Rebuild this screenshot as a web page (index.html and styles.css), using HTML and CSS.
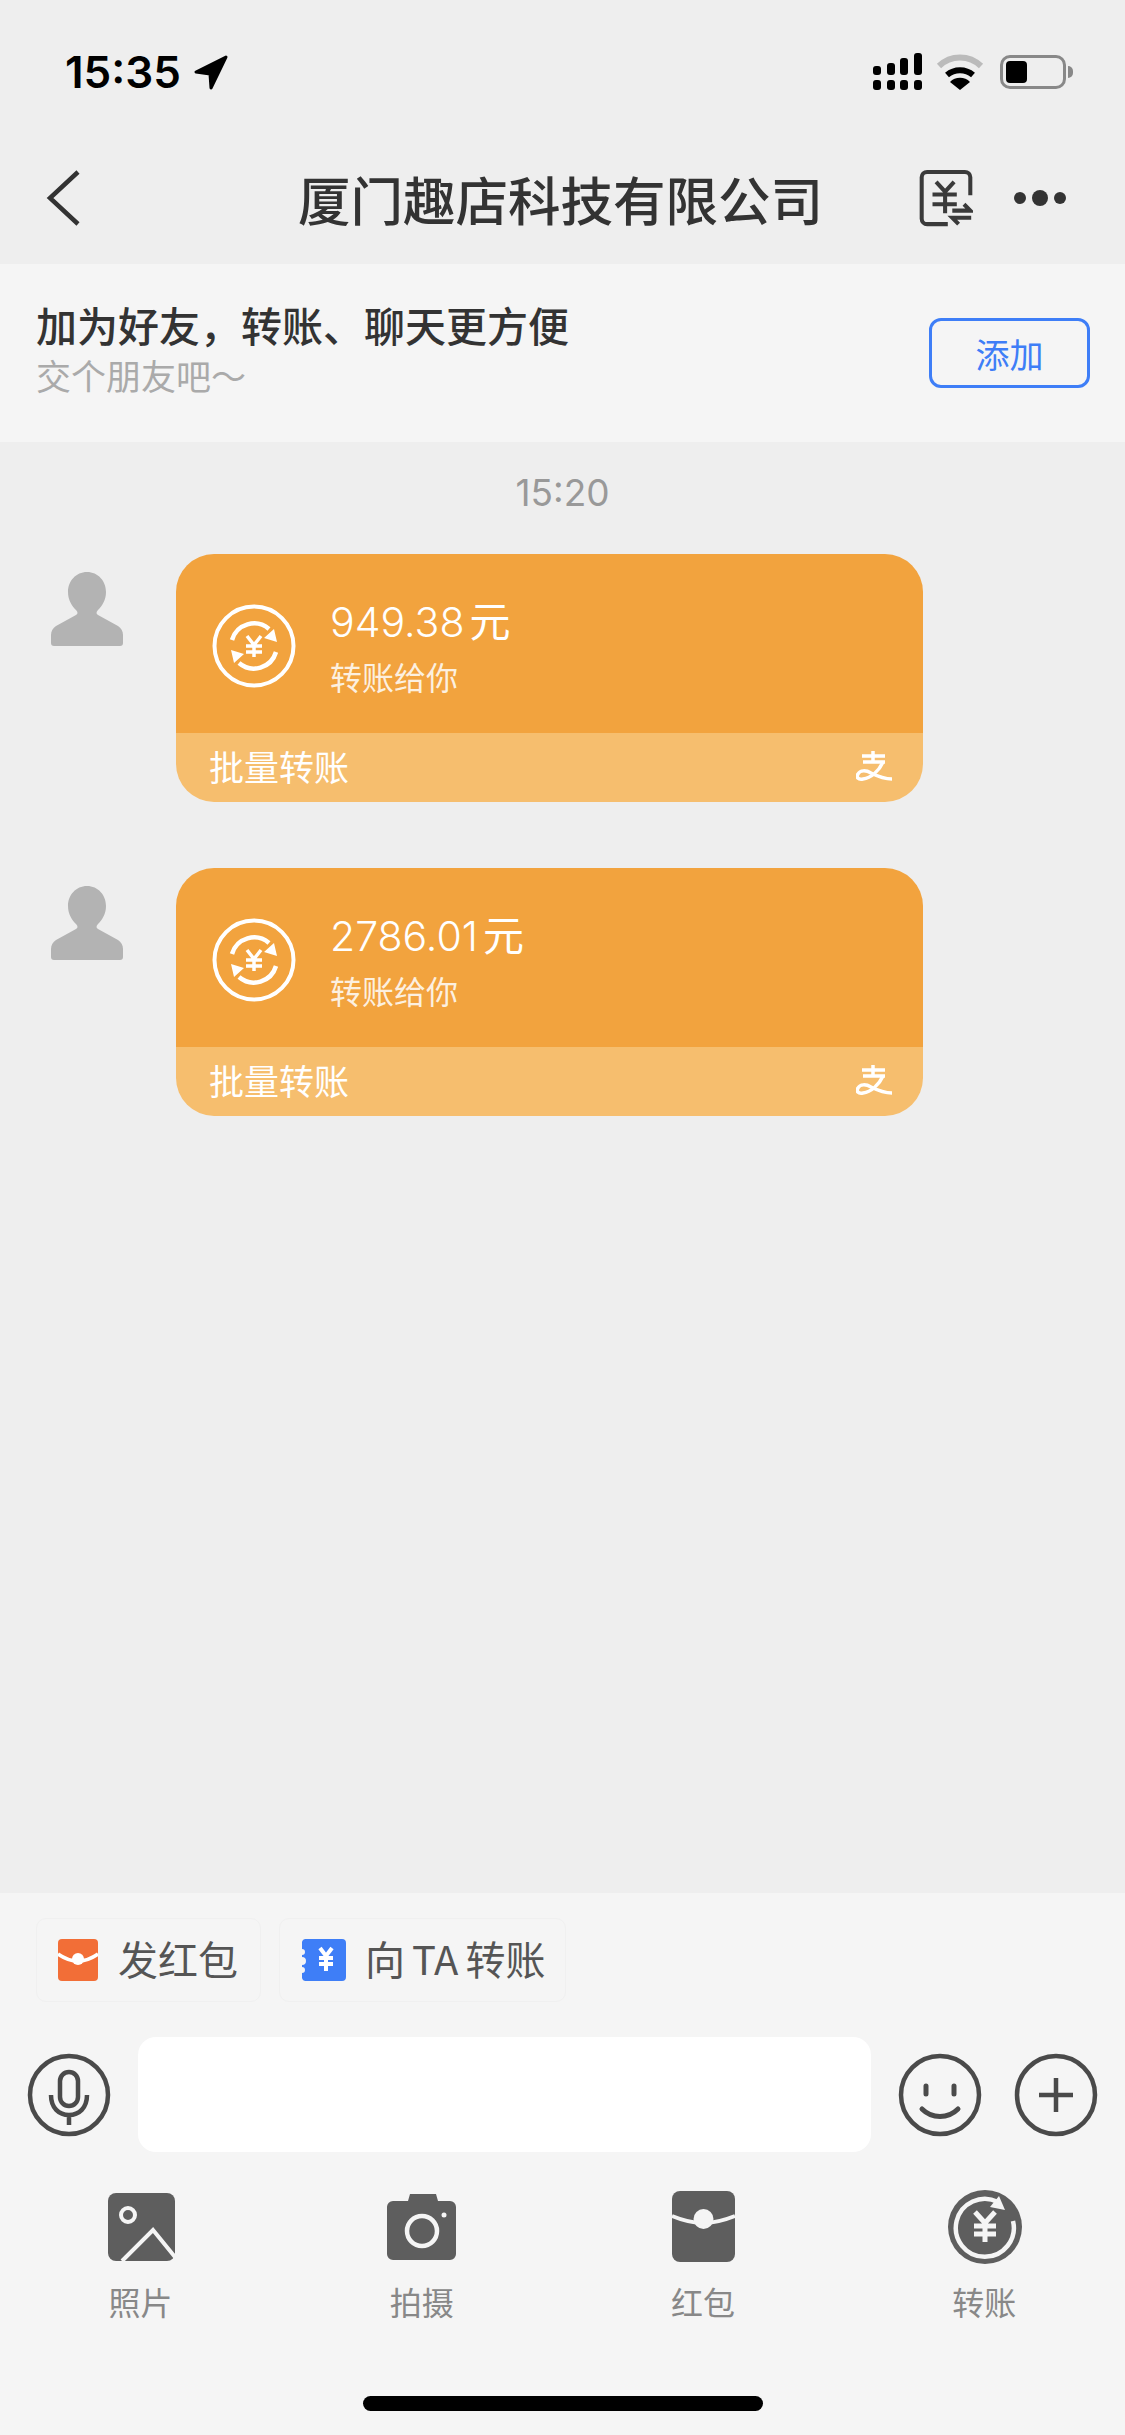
FILE: index.html
```html
<!DOCTYPE html>
<html lang="zh-CN">
<head>
  <meta charset="UTF-8">
  <title>厦门趣店科技有限公司</title>
  <link rel="stylesheet" href="styles.css">
</head>
<body>
<div class="page">
  <header class="top">
    <div class="status">
      <div class="clock">
        <span>15:35</span>
        <svg width="36" height="36" viewBox="0 0 36 36"><path d="M33 3 3 18l14 2 1 14z" fill="#000" stroke="#000" stroke-width="3" stroke-linejoin="round"/></svg>
      </div>
      <div class="status-icons">
        <svg class="signal" width="50" height="40" viewBox="0 0 50 40" fill="#000">
          <rect x="0" y="14" width="8" height="9" rx="3"/><rect x="14" y="11" width="8" height="12" rx="3"/><rect x="27" y="6" width="8" height="17" rx="3"/><rect x="41" y="1" width="8" height="22" rx="3"/>
          <rect x="0" y="28" width="8" height="10" rx="3"/><rect x="14" y="28" width="8" height="10" rx="3"/><rect x="27" y="28" width="8" height="10" rx="3"/><rect x="41" y="28" width="8" height="10" rx="3"/>
        </svg>
        <svg class="wifi" width="50" height="38" viewBox="0 0 48 38">
          <path d="M3 13a30 30 0 0 1 42 0" fill="none" stroke="#bbb" stroke-width="6"/>
          <path d="M11 22a20 20 0 0 1 26 0" fill="none" stroke="#000" stroke-width="6"/>
          <path d="M14 29a14 14 0 0 1 20 0L24 37z" fill="#000"/>
        </svg>
        <div class="battery"><div class="battery-fill"></div></div>
      </div>
    </div>
    <nav class="nav">
      <a class="back">
        <svg width="36" height="56" viewBox="0 0 36 56"><path d="M33 2 5 28l28 26" fill="none" stroke="#333" stroke-width="4.5" transform="translate(-1 0)"/></svg>
      </a>
      <h1 class="title">厦门趣店科技有限公司</h1>
      <div class="nav-actions">
        <svg width="54" height="58" viewBox="0 0 60 64" fill="none" stroke="#3a3a3a" stroke-width="4.5">
          <path d="M32 61H9a6 6 0 0 1-6-6V9a6 6 0 0 1 6-6h42a6 6 0 0 1 6 6v20"/>
          <path d="M19 14l10 11 10-11M15 28h27M15 39h27M29 25v24"/>
          <path d="M37 46h20l-7-7M58 54H37l7 7"/>
        </svg>
        <div class="dots"><i></i><i class="big"></i><i></i></div>
      </div>
    </nav>
  </header>

  <section class="banner">
    <div class="banner-text">
      <div class="banner-title">加为好友，转账、聊天更方便</div>
      <div class="banner-sub">交个朋友吧～</div>
    </div>
    <button class="add-btn">添加</button>
  </section>

  <main class="chat">
    <div class="chat-time">15:20</div>

    <div class="msg">
      <svg class="avatar" viewBox="0 0 74 76"><path d="M37 0c11 0 19 9 19 20 0 8-4 14-8 18-2 2-2 4 0 5l20 11c3 2 5 5 5 9v8c0 2-1 3-3 3H4c-2 0-3-1-3-3v-8c0-4 2-7 5-9l20-11c2-1 2-3 0-5-4-4-8-10-8-18C18 9 26 0 37 0z" fill="#b3b3b3"/></svg>
      <div class="card">
        <div class="card-body">
          <svg class="card-icon" viewBox="0 0 84 84" fill="none" stroke="#fff">
            <circle cx="42" cy="42" r="39.5" stroke-width="4"/>
            <path d="M20 36a23 23 0 0 1 37-11M64 48a23 23 0 0 1-37 11" stroke-width="4.5"/>
            <path d="M65 38 52 34l10-9zM19 46l13 4-10 9z" fill="#fff" stroke="none"/>
            <path d="M35 32l7 9 7-9M34 42h16M34 48h16M42 41v12" stroke-width="3.5"/>
          </svg>
          <div class="amount-text">
            <div class="amount">949.38<span class="yuan">元</span></div>
            <div class="amount-note">转账给你</div>
          </div>
        </div>
        <div class="card-foot">
          <span>批量转账</span>
          <svg class="zhi" viewBox="0 0 38 32" fill="none" stroke="#fff" stroke-width="3.5">
            <path d="M6 6h23M17 1v11M7 12h22"/>
            <path d="M27 12C23 21 15 28 7 29 2 30 0 27 2 24c2-4 8-4 13-1 6 3 12 6 21 6"/>
          </svg>
        </div>
      </div>
    </div>

    <div class="msg">
      <svg class="avatar" viewBox="0 0 74 76"><path d="M37 0c11 0 19 9 19 20 0 8-4 14-8 18-2 2-2 4 0 5l20 11c3 2 5 5 5 9v8c0 2-1 3-3 3H4c-2 0-3-1-3-3v-8c0-4 2-7 5-9l20-11c2-1 2-3 0-5-4-4-8-10-8-18C18 9 26 0 37 0z" fill="#b3b3b3"/></svg>
      <div class="card">
        <div class="card-body">
          <svg class="card-icon" viewBox="0 0 84 84" fill="none" stroke="#fff">
            <circle cx="42" cy="42" r="39.5" stroke-width="4"/>
            <path d="M20 36a23 23 0 0 1 37-11M64 48a23 23 0 0 1-37 11" stroke-width="4.5"/>
            <path d="M65 38 52 34l10-9zM19 46l13 4-10 9z" fill="#fff" stroke="none"/>
            <path d="M35 32l7 9 7-9M34 42h16M34 48h16M42 41v12" stroke-width="3.5"/>
          </svg>
          <div class="amount-text">
            <div class="amount">2786.01<span class="yuan">元</span></div>
            <div class="amount-note">转账给你</div>
          </div>
        </div>
        <div class="card-foot">
          <span>批量转账</span>
          <svg class="zhi" viewBox="0 0 38 32" fill="none" stroke="#fff" stroke-width="3.5">
            <path d="M6 6h23M17 1v11M7 12h22"/>
            <path d="M27 12C23 21 15 28 7 29 2 30 0 27 2 24c2-4 8-4 13-1 6 3 12 6 21 6"/>
          </svg>
        </div>
      </div>
    </div>
  </main>

  <footer class="bottom">
    <div class="chips">
      <div class="chip">
        <svg width="40" height="42" viewBox="0 0 40 42"><rect width="40" height="42" rx="4" fill="#f26e37"/><path d="M0 15c7 5 13 7 20 7s13-2 20-7" fill="none" stroke="#fff" stroke-width="3.5"/><circle cx="20" cy="20" r="6" fill="#fff"/></svg>
        <span>发红包</span>
      </div>
      <div class="chip chip-pay">
        <svg width="46" height="42" viewBox="0 0 46 42"><path d="M6 0h36a4 4 0 0 1 4 4v34a4 4 0 0 1-4 4H6a4 4 0 0 1-4-3v-5a3 3 0 0 0 0-6v-2a3 3 0 0 0 0-8v-2a3 3 0 0 0 0-6V3a4 4 0 0 1 4-3z" fill="#3e7ef7"/><path d="M20 9l6 8 6-8M19 19h14M19 25h14M26 17v15" fill="none" stroke="#fff" stroke-width="4"/></svg>
        <span>向 TA 转账</span>
      </div>
    </div>

    <div class="input-row">
      <svg class="round-btn" viewBox="0 0 84 84" fill="none" stroke="#4a4a4a" stroke-width="4.5">
        <circle cx="42" cy="42" r="39"/>
        <rect x="33" y="19" width="18" height="34" rx="9"/>
        <path d="M24 42c0 13 8 20 18 20s18-7 18-20M42 62v10"/>
      </svg>
      <div class="input-box"></div>
      <svg class="round-btn smile" viewBox="0 0 84 84" fill="none" stroke="#4a4a4a" stroke-width="4.5">
        <circle cx="42" cy="42" r="39"/>
        <path d="M28 33v8M56 33v8" stroke-linecap="round" stroke-width="5"/>
        <path d="M24 56c10 10 26 10 36 0" stroke-linecap="round" stroke-width="5"/>
      </svg>
      <svg class="round-btn plus" viewBox="0 0 84 84" fill="none" stroke="#4a4a4a" stroke-width="4.5">
        <circle cx="42" cy="42" r="39"/>
        <path d="M25 42h34M42 25v34"/>
      </svg>
    </div>

    <div class="tools">
      <div class="tool">
        <svg width="76" height="76" viewBox="0 0 76 76"><rect x="5" y="4" width="67" height="68" rx="8" fill="#5e5e5e"/><circle cx="25" cy="26" r="7" fill="none" stroke="#f5f5f5" stroke-width="4"/><path d="M19 72l31-31 22 27" fill="none" stroke="#f5f5f5" stroke-width="4"/></svg>
        <span>照片</span>
      </div>
      <div class="tool">
        <svg width="76" height="76" viewBox="0 0 76 76"><path d="M24 12l2-7h26l2 7h12a6 6 0 0 1 6 6v47a6 6 0 0 1-6 6H9a6 6 0 0 1-6-6V18a6 6 0 0 1 6-6z" fill="#5e5e5e"/><circle cx="38" cy="42" r="15" fill="none" stroke="#f5f5f5" stroke-width="4.5"/><circle cx="60" cy="26" r="2.5" fill="#f5f5f5"/></svg>
        <span>拍摄</span>
      </div>
      <div class="tool">
        <svg width="76" height="76" viewBox="0 0 76 76"><rect x="7" y="2" width="63" height="71" rx="8" fill="#5e5e5e"/><path d="M7 27c12 5 22 7 31.500 7s19-2 31.500-7" fill="none" stroke="#f5f5f5" stroke-width="4"/><circle cx="38.500" cy="30" r="10" fill="#f5f5f5"/></svg>
        <span>红包</span>
      </div>
      <div class="tool">
        <svg width="76" height="76" viewBox="0 0 76 76" fill="none"><circle cx="39" cy="38" r="37" fill="#5e5e5e"/><path d="M52 13A29 29 0 1 0 67 32" stroke="#f5f5f5" stroke-width="4.500"/><path d="M53 7l6 14-15-3z" fill="#f5f5f5"/><path d="M29 23l10 11 10-11M28 37h22M28 45h22M39 34v19" stroke="#f5f5f5" stroke-width="5"/></svg>
        <span>转账</span>
      </div>
    </div>

    <div class="home-bar"></div>
  </footer>
</div>
</body>
</html>
```

FILE: styles.css
```css
* { box-sizing: border-box; }
body {
  margin: 0;
  font-family: "Noto Sans CJK SC", "Noto Sans", sans-serif;
  background-color: #eee;
}
.page {
  width: 1125px;
  height: 2435px;
  display: flex;
  flex-direction: column;
  overflow: hidden;
}

/* status + nav */
.top {
  height: 264px;
  background-color: #eee;
}
.status {
  height: 132px;
  padding: 12px 59px 0 65px;
  display: flex;
  justify-content: space-between;
  align-items: center;
}
.clock {
  display: flex;
  align-items: center;
  gap: 12px;
  font-family: Inter, "Liberation Sans", sans-serif;
  font-weight: 600;
  font-size: 44px;
  color: #000;
}
.status-icons {
  display: flex;
  align-items: center;
  gap: 12px;
}
.wifi {
  margin-right: 3px;
}
.battery {
  position: relative;
  width: 66px;
  height: 34px;
  border: 3px solid #888;
  border-radius: 10px;
  padding: 3px;
}
.battery::after {
  content: "";
  position: absolute;
  right: -10px;
  top: 8px;
  width: 5px;
  height: 12px;
  background-color: #888;
  border-radius: 0 5px 5px 0;
}
.battery-fill {
  width: 21px;
  height: 22px;
  background-color: #000;
  border-radius: 4px;
}
.nav {
  height: 132px;
  padding: 0 59px 0 46px;
  display: grid;
  grid-template-columns: 1fr auto 1fr;
  align-items: center;
}
.back { display: block; height: 56px; }
.title {
  margin: 0 0 0 9px;
  font-size: 52.5px;
  font-weight: 500;
  color: #333;
  line-height: 1;
}
.nav-actions {
  display: flex;
  justify-content: flex-end;
  align-items: center;
  gap: 41px;
}
.dots {
  display: flex;
  align-items: center;
  gap: 6px;
}
.dots i {
  width: 12px;
  height: 12px;
  border-radius: 50%;
  background-color: #333;
}
.dots i.big {
  width: 16px;
  height: 16px;
}

/* add friend */
.banner {
  height: 178px;
  padding: 0 35px 0 36px;
  background-color: #f5f5f5;
  display: flex;
  justify-content: space-between;
  align-items: center;
}
.banner-text {
  margin-top: -12px;
}
.banner-title {
  font-size: 41px;
  font-weight: 500;
  color: #333;
  line-height: 56px;
}
.banner-sub {
  font-size: 35px;
  color: #aaa;
  line-height: 46px;
}
.add-btn {
  width: 161px;
  height: 70px;
  padding: 0;
  background: transparent;
  border: 3px solid #3e7ef7;
  border-radius: 12px;
  font-family: inherit;
  font-size: 34px;
  color: #3e7ef7;
}

/* messages */
.chat {
  flex: 1;
  background-color: #eee;
  padding-top: 28px;
}
.chat-time {
  text-align: center;
  font-family: Inter, "Liberation Sans", sans-serif;
  font-size: 37px;
  line-height: 46px;
  color: #999;
  margin-bottom: 38px;
}
.msg {
  display: flex;
  gap: 52px;
  padding-left: 50px;
  margin-bottom: 66px;
}
.avatar {
  width: 74px;
  height: 76px;
  margin-top: 18px;
}
.card {
  width: 747px;
  border-radius: 38px;
  overflow: hidden;
}
.card-body {
  height: 179px;
  background-color: #f2a33e;
  display: flex;
  align-items: center;
  padding-left: 36px;
  gap: 34px;
  color: #fff;
}
.card-icon {
  width: 84px;
  height: 84px;
  margin-top: 5px;
}
.amount-text {
  padding-top: 4px;
}
.amount {
  font-family: Inter, "Noto Sans CJK SC", sans-serif;
  font-weight: 300;
  font-size: 41px;
  line-height: 52px;
}
.yuan {
  font-family: "Noto Sans CJK SC", sans-serif;
  font-weight: 400;
  margin-left: 5px;
}
.amount-note {
  font-size: 32px;
  line-height: 44px;
  margin-top: 6px;
  color: rgba(255, 255, 255, 0.85);
}
.card-foot {
  height: 69px;
  background-color: #f6be6e;
  display: flex;
  justify-content: space-between;
  align-items: center;
  padding: 0 31px 4px 33px;
  font-size: 35px;
  color: #fff;
}
.zhi {
  width: 38px;
  height: 32px;
  margin-right: -2px;
}

/* input area */
.bottom {
  height: 542px;
  background-color: #f5f5f5;
  padding-top: 25px;
}
.chips {
  display: flex;
  gap: 18px;
  padding-left: 36px;
}
.chip {
  height: 84px;
  display: flex;
  align-items: center;
  gap: 20px;
  padding: 0 22px 0 21px;
  border: 1px solid #f0f0f0;
  border-radius: 10px;
  font-size: 40px;
  color: #555;
}
.chip span {
  padding-bottom: 4px;
  word-spacing: -2px;
}
.chip-pay {
  gap: 19px;
  padding: 0 20px;
}
.input-row {
  display: flex;
  align-items: center;
  margin-top: 35px;
  padding: 0 27px;
}
.round-btn {
  width: 84px;
  height: 84px;
  flex: none;
}
.input-box {
  width: 735px;
  height: 115px;
  margin: 0 27px;
  background-color: #fff;
  border-radius: 18px;
}
.plus {
  margin-left: 32px;
}
.tools {
  display: grid;
  grid-template-columns: repeat(4, 1fr);
  margin-top: 37px;
}
.tool {
  display: flex;
  flex-direction: column;
  align-items: center;
  gap: 13px;
  font-size: 32px;
  color: #888;
}
.home-bar {
  width: 400px;
  height: 15px;
  margin: 72px auto 0;
  background-color: #000;
  border-radius: 8px;
}
```
